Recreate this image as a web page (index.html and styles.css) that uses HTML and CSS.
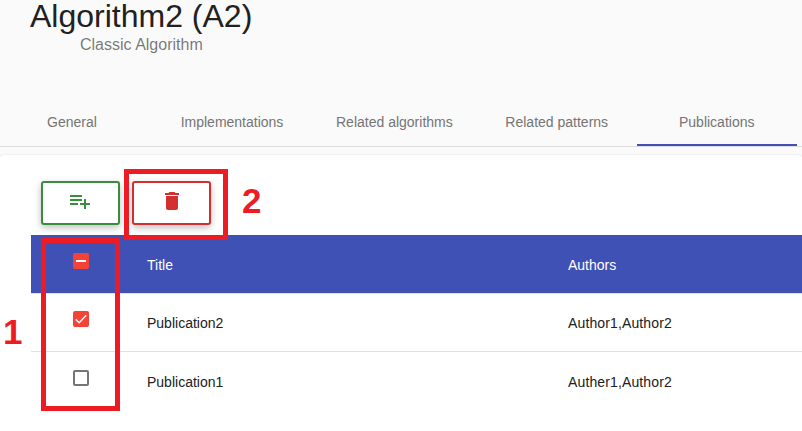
FILE: index.html
```html
<!DOCTYPE html>
<html lang="en">
<head>
<meta charset="utf-8">
<title>Algorithm2 (A2)</title>
<link rel="stylesheet" href="styles.css">
</head>
<body>
<header class="heading">
  <h1 class="title">Algorithm2 (A2)</h1>
  <p class="subtitle">Classic Algorithm</p>
</header>
<nav class="tabs">
  <a class="tab">General</a>
  <a class="tab">Implementations</a>
  <a class="tab">Related algorithms</a>
  <a class="tab">Related patterns</a>
  <a class="tab tab-active">Publications</a>
</nav>
<main class="card">
  <div class="actions">
    <button class="action action-add" aria-label="Add">
      <svg viewBox="0 0 24 24"><path d="M14 10H2v2h12v-2zm0-4H2v2h12V6zm4 8v-4h-2v4h-4v2h4v4h2v-4h4v-2h-4zM2 16h8v-2H2v2z"/></svg>
    </button>
    <button class="action action-delete" aria-label="Delete">
      <svg viewBox="0 0 24 24"><path d="M6 19c0 1.1.9 2 2 2h8c1.1 0 2-.9 2-2V7H6v12zM19 4h-3.5l-1-1h-5l-1 1H5v2h14V4z"/></svg>
    </button>
  </div>
  <div class="table">
    <div class="row row-head">
      <div class="check"><span class="box box-filled"><svg viewBox="0 0 16 16"><path d="M3 8h10"/></svg></span></div>
      <div>Title</div>
      <div>Authors</div>
    </div>
    <div class="row">
      <div class="check"><span class="box box-filled"><svg viewBox="0 0 16 16"><path class="tick" d="M2.7 8.4l3.5 3.3 7.1-7.4"/></svg></span></div>
      <div>Publication2</div>
      <div class="authors">Author1,Author2</div>
    </div>
    <div class="row row-last">
      <div class="check"><span class="box"></span></div>
      <div>Publication1</div>
      <div class="authors">Auther1,Author2</div>
    </div>
  </div>
</main>
<div class="mark mark-rows"></div>
<div class="mark mark-delete"></div>
<span class="number number-one">1</span>
<span class="number number-two">2</span>
</body>
</html>
```
FILE: styles.css
```css
* { box-sizing: border-box; }
body {
  position: relative;
  margin: 0;
  height: 431px;
  background: #fafafa;
  color: #212121;
  font-family: "Liberation Sans", Arial, sans-serif;
  font-size: 14px;
}
.heading { height: 98px; padding-left: 30px; }
.title {
  margin: 0;
  font-size: 32px;
  font-weight: 400;
  line-height: 32px;
}
.subtitle {
  margin: 3px 0 0 50px;
  color: rgba(0, 0, 0, .54);
  font-size: 16px;
  line-height: 20px;
}
.tabs {
  display: flex;
  height: 49px;
  margin-left: -8px;
  border-bottom: 1px solid #dcdcdc;
}
.tab {
  flex: none;
  min-width: 160px;
  height: 48px;
  padding: 0 24px;
  border-bottom: 2px solid transparent;
  color: #757575;
  line-height: 48px;
  text-align: center;
}
.tab-active { border-color: #3f51b5; }
.card {
  height: 276px;
  margin-top: 8px;
  padding: 26px 0 0 31px;
  border-radius: 4px 4px 0 0;
  background: #fff;
  box-shadow: 0 0 2px rgba(0, 0, 0, .14);
}
.actions { display: flex; gap: 12px; padding-left: 10px; }
.action {
  display: flex;
  justify-content: center;
  width: 79px;
  height: 44px;
  padding: 6px 0 0;
  border: 2px solid;
  border-radius: 3px;
  background: #fff;
  box-shadow: 0 3px 6px rgba(0, 0, 0, .14), 0 2px 8px rgba(0, 0, 0, .12);
}
.action svg { width: 24px; height: 24px; fill: currentColor; }
.action-add { padding-right: 1px; color: #388e3c; }
.action-delete { color: #d32f2f; }
.table { margin-top: 10px; }
.row {
  display: grid;
  grid-template-columns: 116px 421px 1fr;
  align-items: center;
  height: 58px;
  border-bottom: 1px solid #e0e0e0;
  line-height: 20px;
}
.row-head { height: 59px; background: #3f51b5 padding-box; color: #fff; }
.row-head > div:not(.check) { padding-top: 2px; }
.row-last { height: 59px; border: 0; }
.check { padding: 0 0 7px 42px; }
.authors { letter-spacing: .13px; }
.box {
  display: block;
  width: 16px;
  height: 16px;
  border: 2px solid #757575;
  border-radius: 2px;
}
.box-filled { border: 0; background: #f44336; }
.box svg {
  display: block;
  width: 16px;
  height: 16px;
  fill: none;
  stroke: #fafafa;
  stroke-width: 2;
}
.box .tick { stroke-width: 1.5; }
.mark { position: absolute; border: 5px solid #ed1c24; }
.mark-rows { left: 41px; top: 238px; width: 79px; height: 173px; }
.mark-delete { left: 124px; top: 169px; width: 104px; height: 71px; }
.number {
  position: absolute;
  color: #ed1c24;
  font-size: 35px;
  font-weight: 700;
  line-height: 40px;
}
.number-one { left: 3px; top: 312px; }
.number-two { left: 242px; top: 181px; }
```
